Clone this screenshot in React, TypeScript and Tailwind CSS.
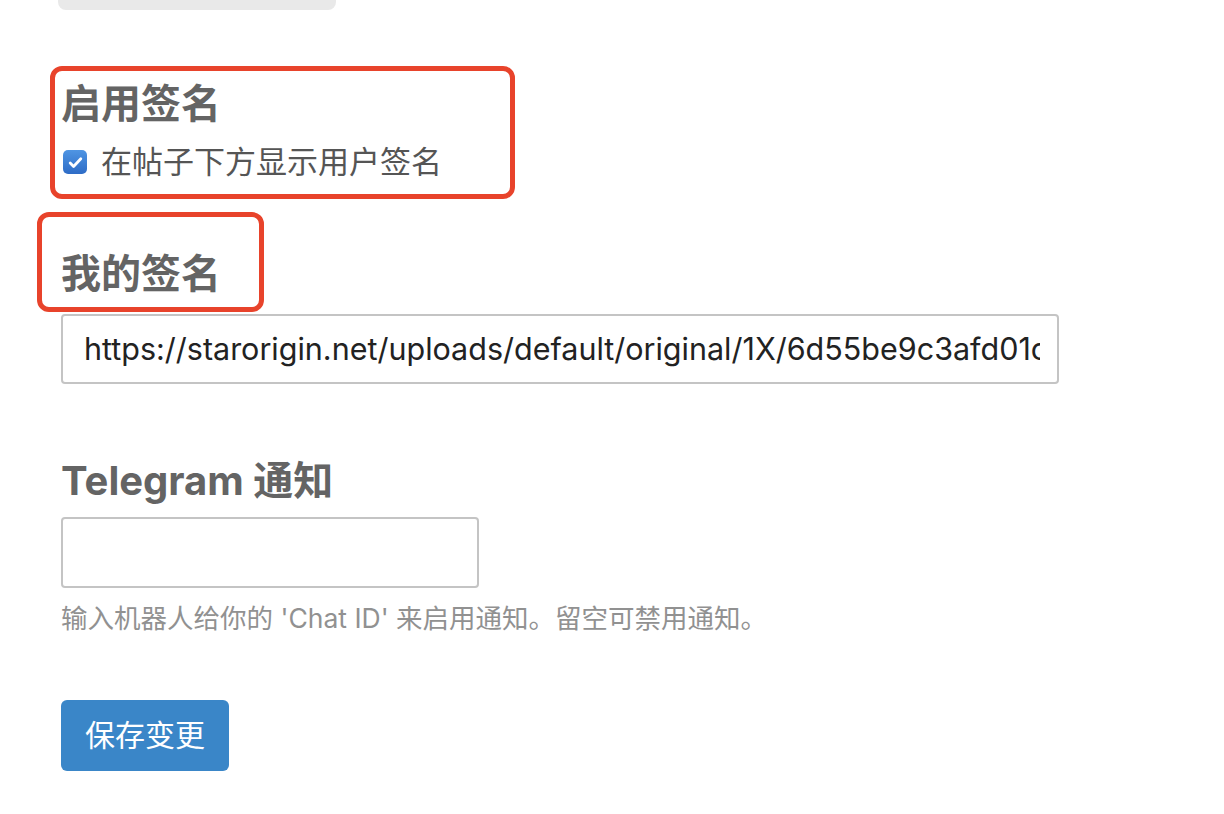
export default function App() {
  const font = { fontFamily: 'Inter, "Noto Sans CJK SC", sans-serif' };

  return (
    <div className="min-h-[814px] w-full bg-white pl-[61px]" style={font}>
      <div className="ml-[-3px] h-[10px] w-[278px] rounded-b-[8px] bg-[#e9e9e9]" />

      {/* enable signature */}
      <div className="relative mt-[71px]">
        <div className="pointer-events-none absolute left-[-11px] top-[-15px] h-[133px] w-[465px] rounded-[12px] border-[5px] border-[#e8432b]" />
        <h3 className="text-[40px] font-bold leading-[46px] text-[#646464]">启用签名</h3>
        <label className="mt-[14px] flex h-[42px] items-center gap-[14px]">
          <span className="ml-[2px] flex h-[24px] w-[24px] items-center justify-center rounded-[5px] bg-gradient-to-b from-[#4f95e3] to-[#2e6cc6]">
            <svg width="17" height="17" viewBox="0 0 16 16" fill="none">
              <path d="M3 8.5l3.2 3.2L13 4.5" stroke="white" strokeWidth="2.6" strokeLinecap="round" strokeLinejoin="round" />
            </svg>
          </span>
          <span className="text-[31px] leading-[42px] text-[#555555]">在帖子下方显示用户签名</span>
        </label>
      </div>

      {/* my signature */}
      <div className="relative mt-[68px]">
        <div className="pointer-events-none absolute left-[-24px] top-[-39px] h-[100px] w-[227px] rounded-[12px] border-[5px] border-[#e8432b]" />
        <h3 className="text-[40px] font-bold leading-[46px] text-[#646464]">我的签名</h3>
      </div>
      <div className="mt-[17px] flex h-[70px] w-[998px] items-center rounded-[4px] border-2 border-[#c4c4c4] pl-[21px] pr-[17px]">
        <div className="overflow-hidden whitespace-nowrap text-[30.5px] text-[#222222]">
          https://starorigin.net/uploads/default/original/1X/6d55be9c3afd01c
        </div>
      </div>

      {/* telegram */}
      <h3 className="mt-[74px] text-[40px] font-bold leading-[46px] text-[#646464]">Telegram 通知</h3>
      <div className="mt-[13px] h-[71px] w-[418px] rounded-[4px] border-2 border-[#c4c4c4]" />
      <p className="mt-[12px] text-[26.5px] leading-[36px] text-[#919191]">
        输入机器人给你的 'Chat ID' 来启用通知。留空可禁用通知。
      </p>

      <button className="mt-[64px] flex h-[71px] w-[168px] items-center justify-center rounded-[6px] bg-[#3a86c8] text-[30px] text-white">
        保存变更
      </button>
    </div>
  );
}
